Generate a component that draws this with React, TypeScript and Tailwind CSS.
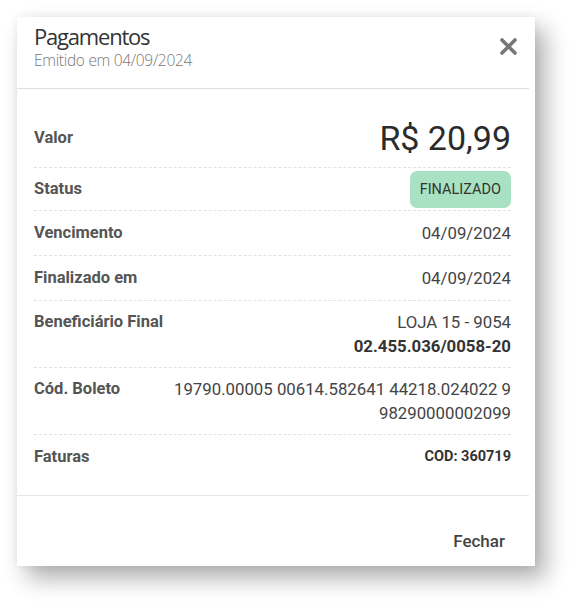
function Row({
  label,
  children,
  className = "",
}: {
  label: string;
  children: React.ReactNode;
  className?: string;
}) {
  return (
    <div className={`flex justify-between border-b border-dashed border-[#e2e2e2] ${className}`}>
      <span className="font-bold text-[16.5px] leading-6 text-[#555]">{label}</span>
      <div className="text-right text-[16.8px] leading-6 text-[#444]">{children}</div>
    </div>
  );
}

export default function App() {
  return (
    <main className="min-h-screen bg-white pt-[17px] pl-[17px] font-['Roboto',sans-serif]">
      <div className="w-[518px] h-[549px] bg-white flex flex-col shadow-[10px_12px_22px_rgba(0,0,0,0.32),0_0_8px_rgba(0,0,0,0.06)]">
        {/* Header */}
        <div className="flex justify-between items-start pl-[17px] pr-[12px] pt-[4px] h-[72px] mr-[6px] border-b border-[#dedede]">
          <div>
            <h1 className="font-['Open_Sans',sans-serif] font-normal text-[22px] leading-[30px] tracking-[-1.2px] text-[#333]">
              Pagamentos
            </h1>
            <p className="font-['Open_Sans',sans-serif] font-light text-[15.5px] leading-[18px] tracking-[-0.3px] text-[#777]">
              Emitido em 04/09/2024
            </p>
          </div>
          <svg className="mt-[17px]" width="17" height="17" viewBox="0 0 17 17">
            <path d="M2 2 L15 15 M15 2 L2 15" stroke="#777" strokeWidth="3.6" strokeLinecap="round" />
          </svg>
        </div>

        {/* Body */}
        <div className="flex-1 px-[17px] pt-[19px] mr-[6px] pr-[18px]">
          <Row label="Valor" className="items-center h-[60px]">
            <span className="text-[34px] leading-[40px] text-[#2b2b2b]">R$ 20,99</span>
          </Row>
          <Row label="Status" className="items-center h-[43px]">
            <span className="inline-block rounded-[7px] bg-[#a9e2c2] px-[10px] py-[7px] text-[14.5px] leading-[23px] text-[#333]">
              FINALIZADO
            </span>
          </Row>
          <Row label="Vencimento" className="py-[10px]">
            04/09/2024
          </Row>
          <Row label="Finalizado em" className="py-[10px]">
            04/09/2024
          </Row>
          <Row label="Beneficiário Final" className="py-[9px] h-[67px]">
            <div>LOJA 15 - 9054</div>
            <div className="font-bold text-[#333]">02.455.036/0058-20</div>
          </Row>
          <Row label="Cód. Boleto" className="py-[9px] h-[67px]">
            <div className="w-[345px]">19790.00005 00614.582641 44218.024022 9 98290000002099</div>
          </Row>
          <div className="flex justify-between py-[10px]">
            <span className="font-bold text-[16.5px] leading-6 text-[#555]">Faturas</span>
            <span className="font-bold text-[14.5px] leading-6 text-[#333]">COD: 360719</span>
          </div>
        </div>

        {/* Footer */}
        <div className="h-[71px] mr-[6px] border-t border-[#e6e6e6] flex items-end justify-end pr-[24px] pb-[13px]">
          <button className="text-[17px] font-medium leading-6 text-[#444]">Fechar</button>
        </div>
      </div>
    </main>
  );
}
